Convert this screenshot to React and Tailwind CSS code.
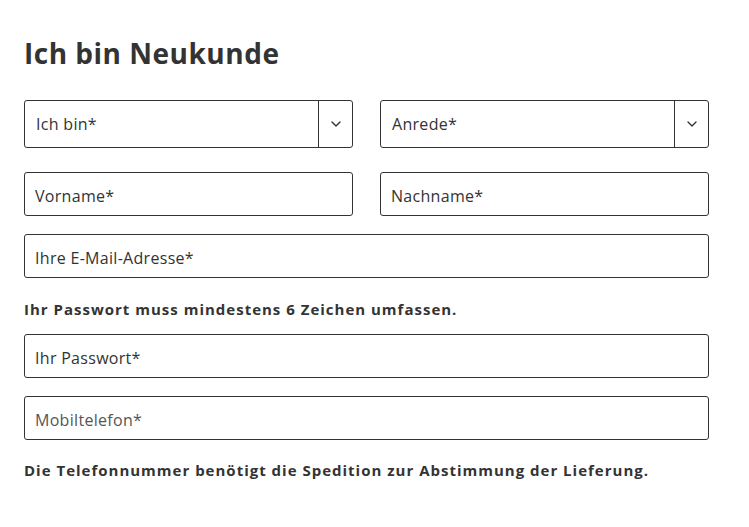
import { ChevronDown } from "lucide-react";

const font = { fontFamily: '"Open Sans", "DejaVu Sans", sans-serif' };

const SelectBox = ({ label }) => (
  <div className="flex h-12 items-stretch rounded-[3px] border border-[#333] bg-white">
    <span className="flex flex-1 items-center pl-[11px] text-[16px] tracking-[0.3px] text-[#333]">
      {label}
    </span>
    <span className="flex w-[34px] items-center justify-center border-l border-[#333]">
      <ChevronDown className="h-4 w-4 text-[#333]" strokeWidth={2} />
    </span>
  </div>
);

const TextBox = ({ label, muted }) => (
  <div className="flex h-11 items-center rounded-[3px] border border-[#333] bg-white pl-[10px] pt-[3px]">
    <span
      className={`text-[16px] tracking-[0.3px] ${muted ? "text-[#555]" : "text-[#333]"}`}
    >
      {label}
    </span>
  </div>
);

export default function App() {
  return (
    <div className="min-h-[527px] w-full bg-white pl-6 pr-10 pt-[36px]" style={font}>
      <h1 className="text-[28px] font-bold leading-[34px] tracking-[0.5px] text-[#333]">
        Ich bin Neukunde
      </h1>

      <div className="mt-[30px] grid grid-cols-2 gap-x-[27px]">
        <SelectBox label="Ich bin*" />
        <SelectBox label="Anrede*" />
      </div>

      <div className="mt-6 grid grid-cols-2 gap-x-[27px]">
        <TextBox label="Vorname*" />
        <TextBox label="Nachname*" />
      </div>

      <div className="mt-[18px]">
        <TextBox label="Ihre E-Mail-Adresse*" />
      </div>

      <p className="mt-[21px] text-[15px] font-bold leading-5 tracking-[1px] text-[#333]">
        Ihr Passwort muss mindestens 6 Zeichen umfassen.
      </p>

      <div className="mt-[15px]">
        <TextBox label="Ihr Passwort*" />
      </div>

      <div className="mt-[18px]">
        <TextBox label="Mobiltelefon*" muted />
      </div>

      <p className="mt-[20px] text-[15px] font-bold leading-5 tracking-[1px] text-[#333]">
        Die Telefonnummer benötigt die Spedition zur Abstimmung der Lieferung.
      </p>
    </div>
  );
}
